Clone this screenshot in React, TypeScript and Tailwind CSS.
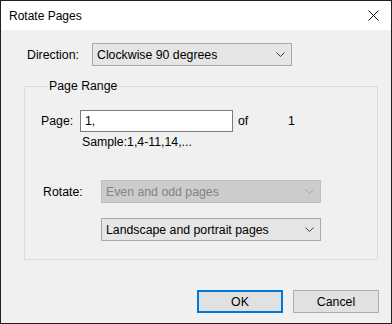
import { ReactNode } from 'react';

const font = { fontFamily: '"Liberation Sans", Arial, sans-serif' };

function Chevron({ color = '#333333' }: { color?: string }) {
  return (
    <svg width="9" height="5" viewBox="0 0 9 5" className="shrink-0" aria-hidden>
      <polyline points="0.5,0.5 4.5,4.5 8.5,0.5" fill="none" stroke={color} strokeWidth="1" />
    </svg>
  );
}

type SelectProps = {
  children: ReactNode;
  disabled?: boolean;
  className?: string;
};

function Select({ children, disabled, className = '' }: SelectProps) {
  return (
    <div
      className={
        'flex h-[23px] items-center justify-between border pl-[4px] pr-[6px] ' +
        (disabled
          ? 'border-[#bfbfbf] bg-[#cccccc] text-[#838383]'
          : 'border-[#a3abb0] bg-[#e5e5e5] text-black') +
        ' ' +
        className
      }
    >
      <span className="leading-[14px]">{children}</span>
      <Chevron color={disabled ? '#a8a8a8' : '#3c3c3c'} />
    </div>
  );
}

function Button({ children, primary }: { children: ReactNode; primary?: boolean }) {
  return (
    <button
      type="button"
      className={
        'h-[23px] w-[86px] bg-[#e1e1e1] text-[12.3px] leading-[14px] text-black ' +
        (primary ? 'border-2 border-[#0078d7]' : 'border border-[#adadad]')
      }
    >
      {children}
    </button>
  );
}

export default function App() {
  return (
    <div
      style={font}
      className="flex h-[324px] w-[392px] flex-col border border-[#1f1f1f] bg-[#f0f0f0] text-[12.3px] text-black"
    >
      <div className="flex h-[29px] shrink-0 items-center justify-between bg-white pl-[8px] pr-[12px]">
        <span className="text-[12px] leading-[14px]">Rotate Pages</span>
        <svg width="11" height="11" viewBox="0 0 11 11" aria-hidden>
          <path d="M0.5 0.5 L10.5 10.5 M10.5 0.5 L0.5 10.5" stroke="#111111" strokeWidth="1" />
        </svg>
      </div>

      <div className="flex flex-1 flex-col pl-[23px] pt-[13px]">
        <div className="flex items-center pl-[3px]">
          <span className="w-[65px] leading-[14px]">Direction:</span>
          <Select className="w-[200px]">Clockwise 90 degrees</Select>
        </div>

        <fieldset className="mt-[13px] w-[354px] border border-[#dcdcdc] pb-[18px] pl-[16px]">
          <legend className="ml-[7px] px-[1px] leading-[14px]">Page Range</legend>

          <div className="mt-[17px] flex items-center">
            <span className="w-[39px] leading-[14px]">Page:</span>
            <div className="flex h-[22px] w-[153px] items-center border border-[#7a7a7a] bg-white pl-[4px] leading-[14px]">
              1,
            </div>
            <span className="ml-[5px] w-[50px] leading-[14px]">of</span>
            <span className="leading-[14px]">1</span>
          </div>

          <div className="mt-[3px] pl-[41px] leading-[14px]">Sample:1,4-11,14,...</div>

          <div className="mt-[31px] flex items-center">
            <span className="w-[60px] pl-[2px] leading-[14px]">Rotate:</span>
            <Select disabled className="w-[220px]">
              Even and odd pages
            </Select>
          </div>

          <div className="mt-[15px] pl-[60px]">
            <Select className="w-[220px]">Landscape and portrait pages</Select>
          </div>
        </fieldset>

        <div className="mt-[30px] flex justify-end gap-[10px] pr-[12px]">
          <Button primary>OK</Button>
          <Button>Cancel</Button>
        </div>
      </div>
    </div>
  );
}
